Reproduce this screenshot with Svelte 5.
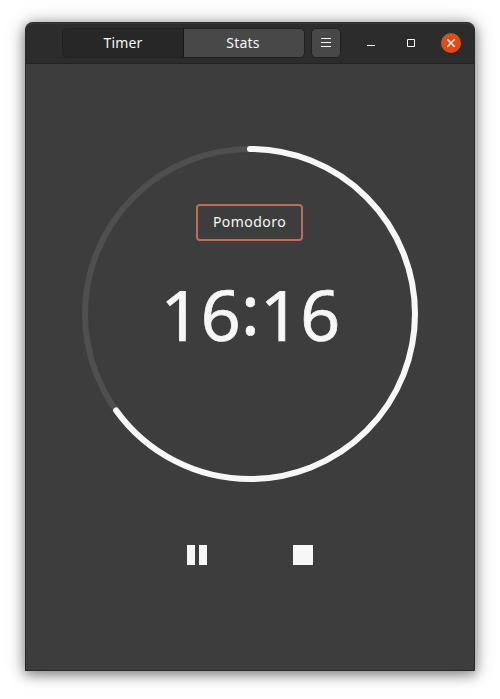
<script>
  let view = $state('Timer');
  const tabs = ['Timer', 'Stats'];
  const radius = 165;
  const circumference = 2 * Math.PI * radius;
  const progress = 0.6503;
</script>

<main>
  <section class="window">
    <header>
      <nav>
        {#each tabs as tab}
          <button class:active={view === tab} onclick={() => (view = tab)}>{tab}</button>
        {/each}
      </nav>
      <button class="menu" aria-label="Menu">
        <svg width="28" height="28" viewBox="0 0 28 28"><path d="M9 9.5h10M9 13.5h10M9 17.5h10" /></svg>
      </button>
      <button class="control minimize" aria-label="Minimize">
        <svg width="20" height="20" viewBox="0 0 20 20"><path d="M6 12.5h8" /></svg>
      </button>
      <button class="control maximize" aria-label="Maximize">
        <svg width="20" height="20" viewBox="0 0 20 20"><path d="M6.5 6.5h7v7h-7z" /></svg>
      </button>
      <button class="control close" aria-label="Close">
        <svg width="20" height="20" viewBox="0 0 20 20"><path d="M6.3 6.3l7.4 7.4M13.7 6.3l-7.4 7.4" /></svg>
      </button>
    </header>

    <div class="dial">
      <svg class="ring" width="336" height="336" viewBox="0 0 336 336">
        <circle cx="168" cy="168" r={radius} stroke="#4f4f4f" />
        <circle
          cx="168" cy="168" r={radius} stroke="#f7f7f7" stroke-linecap="round"
          stroke-dasharray="{circumference * progress} {circumference}"
          transform="rotate(-90 168 168)"
        />
      </svg>
      <div class="face">
        <div class="label">Pomodoro</div>
        <div class="time">16<span class="colon">:</span>16</div>
      </div>
    </div>

    <div class="actions">
      <button aria-label="Pause"><svg width="20" height="20"><path d="M0 0h8v20H0zM12 0h8v20h-8z" /></svg></button>
      <button aria-label="Stop"><svg width="20" height="20"><path d="M0 0h20v20H0z" /></svg></button>
    </div>
  </section>
</main>

<style>
  :global(body) { background: #fff; overflow: hidden; }
  main {
    box-sizing: border-box;
    height: 699px;
    padding: 22px 25px 28px;
    font-family: "Noto Sans", "Open Sans", sans-serif;
    color: #f7f7f7;
  }
  .window {
    box-sizing: border-box;
    height: 649px;
    display: flex;
    flex-direction: column;
    align-items: center;
    background: #3d3d3d;
    border: 1px solid #292929;
    border-top-color: #303030;
    border-radius: 8px 8px 0 0;
    box-shadow: 0 3px 12px 1px rgba(0, 0, 0, 0.4), 0 1px 22px rgba(0, 0, 0, 0.2);
  }
  button {
    padding: 0;
    border: 0;
    background: none;
    color: inherit;
    font: inherit;
  }
  svg { display: block; }
  header {
    box-sizing: border-box;
    width: 100%;
    height: 41px;
    display: flex;
    align-items: flex-start;
    padding: 4px 13px 0 36px;
    background: #2c2c2c;
    border-top: 1px solid #383838;
    border-bottom: 1px solid #232323;
    border-radius: 7px 7px 0 0;
  }
  nav {
    box-sizing: border-box;
    width: 243px;
    height: 30px;
    display: flex;
    border: 1px solid #202020;
    border-radius: 5px;
    background: #484848;
    overflow: hidden;
  }
  nav button {
    width: 120px;
    height: 28px;
    font-size: 14px;
    line-height: 28px;
    letter-spacing: 0.2px;
  }
  nav button.active { background: #272727; box-shadow: 0 0 0 1px #171717; }
  .menu {
    box-sizing: border-box;
    width: 30px;
    height: 30px;
    margin-left: 6px;
    border: 1px solid #202020;
    border-radius: 5px;
    background: #484848;
  }
  .menu path, .control path { fill: none; stroke: #f7f7f7; stroke-width: 1; }
  .control { width: 20px; height: 20px; margin-top: 5px; border-radius: 50%; }
  .minimize, .maximize, .close { margin-left: 20px; }
  .close { background: #e04b16; }
  .close path { stroke-width: 1.5; }
  .dial {
    display: grid;
    width: 336px;
    height: 336px;
    margin-top: 82px;
  }
  .ring, .face { grid-area: 1 / 1; }
  .ring circle { fill: none; stroke-width: 6; }
  .face {
    display: flex;
    flex-direction: column;
    align-items: center;
    padding-top: 58px;
  }
  .label {
    box-sizing: border-box;
    width: 107px;
    height: 37px;
    margin-right: 1px;
    border: 2px solid #bd6e53;
    border-radius: 4px;
    text-align: center;
    font-size: 14px;
    line-height: 32px;
    letter-spacing: 0.45px;
  }
  .time {
    display: flex;
    margin-top: 23px;
    padding-left: 1px;
    font-size: 70px;
    line-height: 100px;
    letter-spacing: 0.2px;
    -webkit-text-stroke: 0.7px #f7f7f7;
  }
  .colon { margin-top: -6px; }
  .actions {
    display: flex;
    gap: 86px;
    margin-top: 63px;
  }
  .actions path { fill: #f7f7f7; }
</style>
